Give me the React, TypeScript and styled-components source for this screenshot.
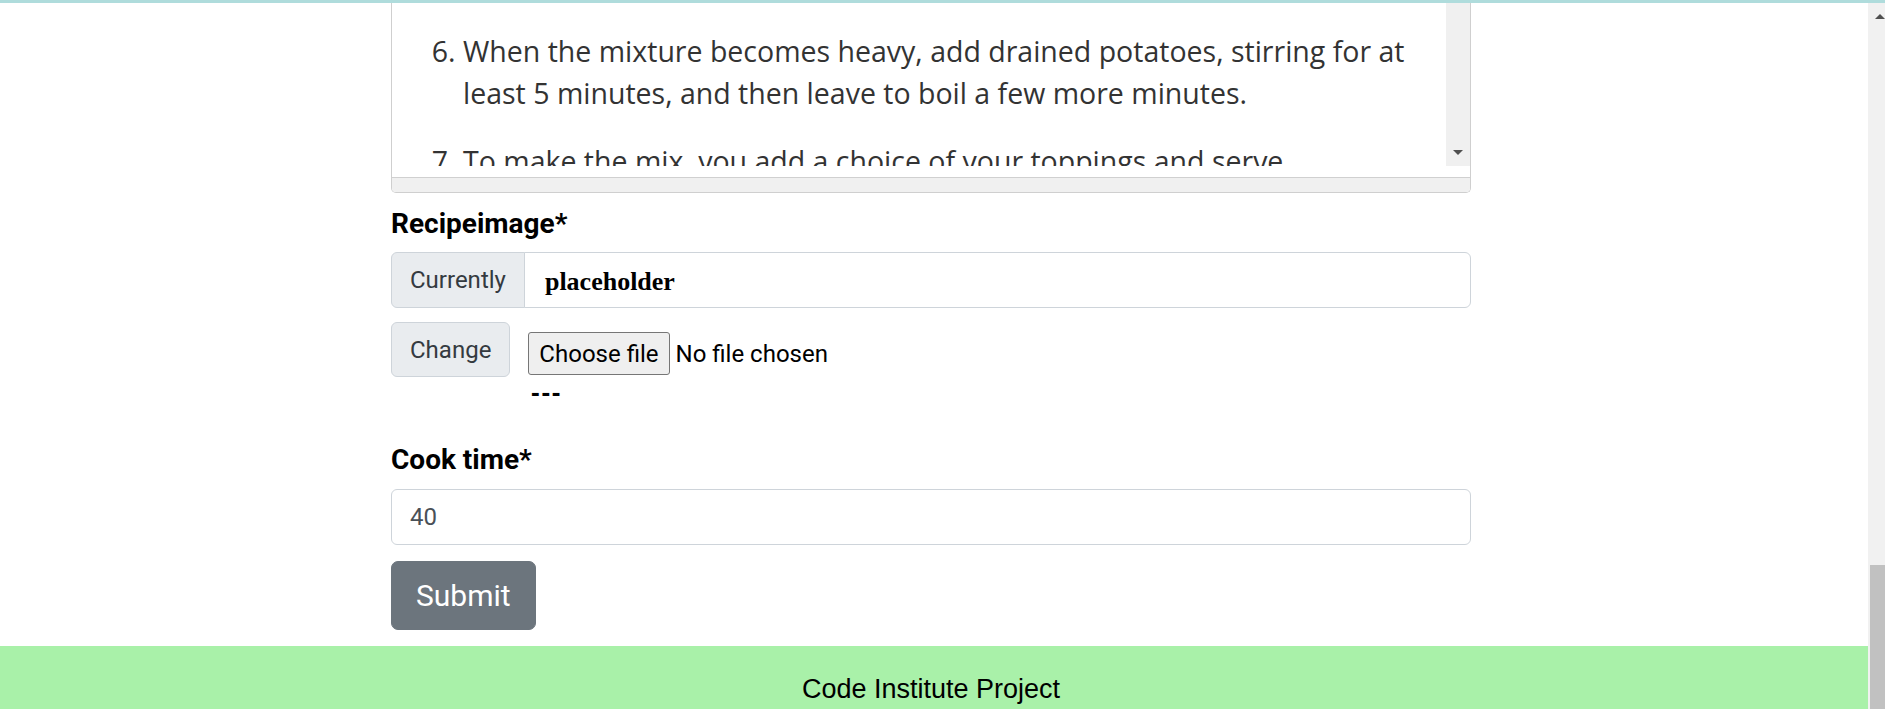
import React from "react";
import styled, { createGlobalStyle } from "styled-components";

const GlobalStyle = createGlobalStyle`
  html, body {
    margin: 0;
    padding: 0;
    height: 709px;
    overflow: hidden;
    background: #ffffff;
  }
  #root { height: 709px; }
  *, *::before, *::after { box-sizing: border-box; }
`;

const Page = styled.div`
  display: flex;
  flex-direction: column;
  width: 1885px;
  height: 709px;
`;

const TopStrip = styled.div`
  flex: none;
  height: 3px;
  background: #afdcdc;
`;

const Body = styled.div`
  flex: 1;
  display: flex;
  min-height: 0;
`;

const Main = styled.div`
  flex: 1;
  min-width: 0;
  display: flex;
  flex-direction: column;
`;

const Form = styled.form`
  width: 1080px;
  margin: 0 0 16px 391px;
  display: flex;
  flex-direction: column;
`;

/* ---------- editor ---------- */
const Editor = styled.div`
  border: 1px solid #cfcfcf;
  border-top: none;
  border-radius: 0 0 5px 5px;
  overflow: hidden;
  display: flex;
  flex-direction: column;
  background: #fff;
`;

const EditorBody = styled.div`
  display: flex;
  height: 163px;
`;

const EditorContent = styled.div`
  flex: 1;
  overflow: hidden;
  padding-top: 27px;
  font-family: "Open Sans", sans-serif;
  font-size: 28.5px;
  line-height: 42px;
  color: #333333;
`;

const Steps = styled.ol`
  margin: 0;
  padding: 0 20px 0 71px;
`;

const Step = styled.li`
  margin-bottom: 26px;
`;

const EditorScroll = styled.div`
  width: 24px;
  background: #f0f0f0;
  display: flex;
  flex-direction: column;
  justify-content: flex-end;
  align-items: center;
  padding-bottom: 11px;
`;

const ArrowDown = styled.span`
  width: 0;
  height: 0;
  border-left: 5px solid transparent;
  border-right: 5px solid transparent;
  border-top: 5px solid #505050;
`;

const EditorGap = styled.div`
  height: 11px;
`;

const StatusBar = styled.div`
  height: 15px;
  border-top: 1px solid #d0d0d0;
  background: #f0f0f0;
`;

/* ---------- fields ---------- */
const Label = styled.label<{ $top: number; $bottom: number }>`
  display: block;
  font-family: Roboto, "Liberation Sans", sans-serif;
  font-weight: 700;
  font-size: 28px;
  line-height: 34px;
  color: #000;
  margin: ${(p) => p.$top}px 0 ${(p) => p.$bottom}px;
`;

const InputGroup = styled.div`
  display: flex;
  height: 56px;
`;

const Addon = styled.div<{ $joined?: boolean }>`
  flex: none;
  display: flex;
  align-items: center;
  padding: 0 18px;
  background: #e9ecef;
  border: 1px solid #ced4da;
  border-radius: ${(p) => (p.$joined ? "6px 0 0 6px" : "6px")};
  font-family: Roboto, "Liberation Sans", sans-serif;
  font-size: 24px;
  color: #343a40;
`;

const CurrentValue = styled.div`
  flex: 1;
  margin-left: -1px;
  display: flex;
  align-items: center;
  padding: 3px 0 0 20px;
  border: 1px solid #ced4da;
  border-radius: 0 6px 6px 0;
  background: #fff;
`;

const FileLink = styled.a`
  font-family: "Liberation Serif", serif;
  font-weight: 700;
  font-size: 26px;
  color: #000;
  text-decoration: none;
`;

const ChangeRow = styled.div`
  display: flex;
  align-items: flex-start;
  margin-top: 14px;
`;

const ChangeAddon = styled(Addon)`
  height: 55px;
`;

const FileArea = styled.div`
  display: flex;
  flex-direction: column;
  margin-left: 18px;
  padding-top: 10px;
`;

const FileControl = styled.div`
  display: flex;
  align-items: center;
  font-family: Roboto, "Liberation Sans", sans-serif;
  font-size: 24px;
  color: #000;
`;

const ChooseButton = styled.button`
  height: 43px;
  padding: 0 10px;
  border: 1px solid #767676;
  border-radius: 3px;
  background: #efefef;
  font-family: Roboto, "Liberation Sans", sans-serif;
  font-size: 24px;
  color: #000;
`;

const NoFile = styled.span`
  margin-left: 6px;
`;

const Dashes = styled.div`
  margin-top: 8px;
  font-family: Roboto, "Liberation Sans", sans-serif;
  font-weight: 900;
  font-size: 23px;
  line-height: 23px;
  padding-left: 2px;
  color: #000;
`;

const TextInput = styled.input`
  height: 56px;
  padding: 0 18px;
  border: 1px solid #ced4da;
  border-radius: 6px;
  font-family: Roboto, "Liberation Sans", sans-serif;
  font-size: 24px;
  color: #495057;
  background: #fff;
  outline: none;
`;

const SubmitButton = styled.button`
  align-self: flex-start;
  margin-top: 16px;
  height: 69px;
  padding: 0 24px;
  background: #6c757d;
  border: 1px solid #6c757d;
  border-radius: 7px;
  font-family: Roboto, "Liberation Sans", sans-serif;
  font-size: 30px;
  line-height: 45px;
  color: #fff;
`;

/* ---------- footer ---------- */
const Footer = styled.footer`
  flex: 1;
  background: #a9f1a9;
  text-align: center;
  padding: 28px 6px 0 0;
  font-family: "Liberation Sans", Arial, sans-serif;
  font-size: 27px;
  color: #000;
`;

/* ---------- page scrollbar ---------- */
const PageScroll = styled.div`
  flex: none;
  width: 17px;
  background: #f1f1f1;
  display: flex;
  flex-direction: column;
`;

const ArrowUp = styled.span`
  margin: 11px 0 0 7px;
  width: 0;
  height: 0;
  border-left: 5px solid transparent;
  border-right: 5px solid transparent;
  border-bottom: 5px solid #505050;
`;

const ScrollSpacer = styled.div`
  flex: 1;
`;

const Thumb = styled.div`
  height: 144px;
  margin-left: 2px;
  background: #c1c1c1;
`;

export default function App() {
  return (
    <>
      <GlobalStyle />
      <Page>
        <TopStrip />
        <Body>
          <Main>
            <Form onSubmit={(e) => e.preventDefault()}>
              <Editor>
                <EditorBody>
                  <EditorContent>
                    <Steps start={6}>
                      <Step>
                        When the mixture becomes heavy, add drained potatoes, stirring for at least 5
                        minutes, and then leave to boil a few more minutes.
                      </Step>
                      <Step>To make the mix, you add a choice of your toppings and serve.</Step>
                    </Steps>
                  </EditorContent>
                  <EditorScroll>
                    <ArrowDown />
                  </EditorScroll>
                </EditorBody>
                <EditorGap />
                <StatusBar />
              </Editor>

              <Label $top={14} $bottom={11}>Recipeimage*</Label>
              <InputGroup>
                <Addon $joined>Currently</Addon>
                <CurrentValue>
                  <FileLink href="#">placeholder</FileLink>
                </CurrentValue>
              </InputGroup>
              <ChangeRow>
                <ChangeAddon>Change</ChangeAddon>
                <FileArea>
                  <FileControl>
                    <ChooseButton type="button">Choose file</ChooseButton>
                    <NoFile>No file chosen</NoFile>
                  </FileControl>
                  <Dashes>---</Dashes>
                </FileArea>
              </ChangeRow>

              <Label $top={37} $bottom={12}>Cook time*</Label>
              <TextInput type="text" defaultValue="40" />
              <SubmitButton type="submit">Submit</SubmitButton>
            </Form>
            <Footer>Code Institute Project</Footer>
          </Main>
          <PageScroll>
            <ArrowUp />
            <ScrollSpacer />
            <Thumb />
          </PageScroll>
        </Body>
      </Page>
    </>
  );
}
